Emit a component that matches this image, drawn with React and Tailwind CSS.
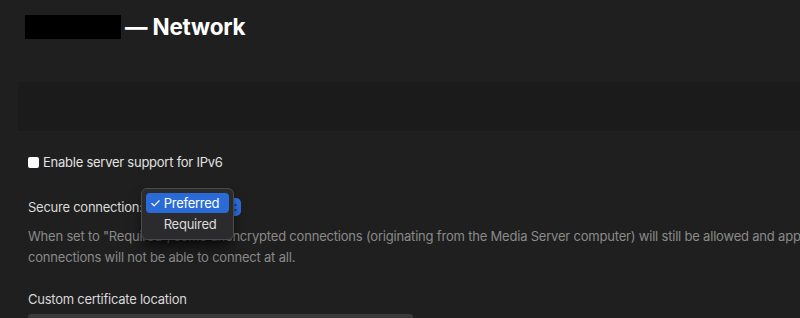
import { Check } from 'lucide-react'

function SecureSelect() {
  return (
    <span className="relative inline-flex items-center">
      <span className="inline-flex h-[18px] w-[98px] items-center justify-end rounded-[5px] bg-[#2d6fe0] pr-[2px]">
        <span className="flex h-[14px] w-[6px] flex-col items-center justify-center text-[6px] leading-[6px] text-[#1f3f80]">
          <span>▴</span>
          <span>▾</span>
        </span>
      </span>
      <div className="absolute left-[-2px] top-[-10px] z-10 w-[93px] rounded-[6px] border border-[#4a4a4c] bg-[#2b2b2d] p-[4px] shadow-lg shadow-black/60">
        <div className="flex h-[20px] items-center gap-[3px] rounded-[4px] bg-[#2a6bd8] pl-[4px] text-[13px] text-white">
          <Check size={11} strokeWidth={2.5} aria-hidden="true" />
          <span>Preferred</span>
        </div>
        <div className="flex h-[22px] items-center pl-[18px] text-[13px] text-[#dcdcdc]">
          Required
        </div>
      </div>
    </span>
  )
}

export default function App() {
  return (
    <div className="h-[318px] w-[800px] overflow-hidden bg-[#1f1f1f] font-['Inter',sans-serif] text-[13px] tracking-[-0.25px]">
      <div className="w-[1100px]">
        <header className="flex h-[52px] items-center gap-[4px] pl-[25px] pt-[1px]">
          <span className="h-[24px] w-[96px] bg-black" />
          <h1 className="text-[22.5px] font-bold tracking-[-0.2px] text-white">— Network</h1>
        </header>

        <div className="ml-[18px] mt-[30px] h-[49px] bg-[#1b1b1b]" />

        <label className="mt-[22px] flex items-center gap-[4px] pl-[28px] text-[#e2e2e2]">
          <span className="size-[11px] rounded-[2px] bg-white" />
          Enable server support for IPv6
        </label>

        <div className="mt-[25px] flex items-center pl-[28px] text-[#dadada]">
          <span>Secure connection:</span>
          <SecureSelect />
        </div>

        <p className="mt-[9px] w-[998px] pl-[28px] leading-[21px] tracking-[-0.2px] text-[#8a8a8a]">
          When set to "Required", some unencrypted connections (originating from the Media Server computer) will still be allowed and apps that don't support secure connections will not be able to connect at all.
        </p>

        <div className="mt-[22px] pl-[28px] text-[#d8d8d8]">Custom certificate location</div>
        <div className="ml-[28px] mt-[4px] h-[28px] w-[385px] rounded-[3px] bg-[#3a3a3a]" />
      </div>
    </div>
  )
}
